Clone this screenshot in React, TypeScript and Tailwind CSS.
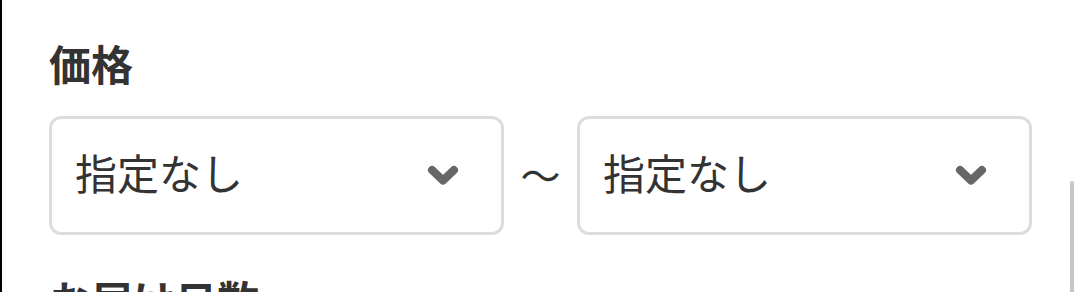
import { ChangeEvent, useState } from 'react'

const font = { fontFamily: '"Noto Sans CJK JP", "Noto Sans", sans-serif' }

function Chevron() {
  return (
    <svg width="32" height="21" viewBox="0 0 32 21" className="shrink-0">
      <path d="M5 5 L16 15.5 L27 5" fill="none" stroke="#666" strokeWidth="8" strokeLinecap="round" strokeLinejoin="round" />
    </svg>
  )
}

function PriceSelect({ value, onChange }: { value: string; onChange: (e: ChangeEvent<HTMLSelectElement>) => void }) {
  return (
    <label className="relative flex-1 h-[119px] flex items-center justify-between rounded-[12px] border-[3px] border-[#dddddd] bg-white pl-[23px] pr-[42px]">
      <span className="mb-[8px] text-[42px] leading-none text-[#333]">{value}</span>
      <Chevron />
      <select
        value={value}
        onChange={onChange}
        className="absolute inset-0 opacity-0 cursor-pointer"
      >
        <option>指定なし</option>
        <option>1,000円</option>
        <option>3,000円</option>
        <option>5,000円</option>
        <option>10,000円</option>
      </select>
    </label>
  )
}

export default function App() {
  const [min, setMin] = useState('指定なし')
  const [max, setMax] = useState('指定なし')

  return (
    <div className="relative h-[292px] w-[1080px] overflow-hidden bg-white border-l-2 border-black" style={font}>
      <div className="pl-[47px] pr-[48px] pt-[42px]">
        {/* 価格 */}
        <h2 className="text-[42px] leading-none font-bold text-[#333]">価格</h2>
        <div className="mt-[32px] flex items-center">
          <PriceSelect value={min} onChange={(e) => setMin(e.target.value)} />
          <span className="mb-[4px] w-[73px] shrink-0 text-center text-[40px] leading-none text-[#333]">〜</span>
          <PriceSelect value={max} onChange={(e) => setMax(e.target.value)} />
        </div>

        {/* お届け日数 */}
        <h2 className="mt-[43px] text-[42px] leading-none font-bold text-[#333]">お届け日数</h2>
      </div>

      {/* scrollbar */}
      <div className="absolute left-[1068px] top-[181px] bottom-0 w-[4px] rounded-t-full bg-[#c6c6c6]" />
    </div>
  )
}
